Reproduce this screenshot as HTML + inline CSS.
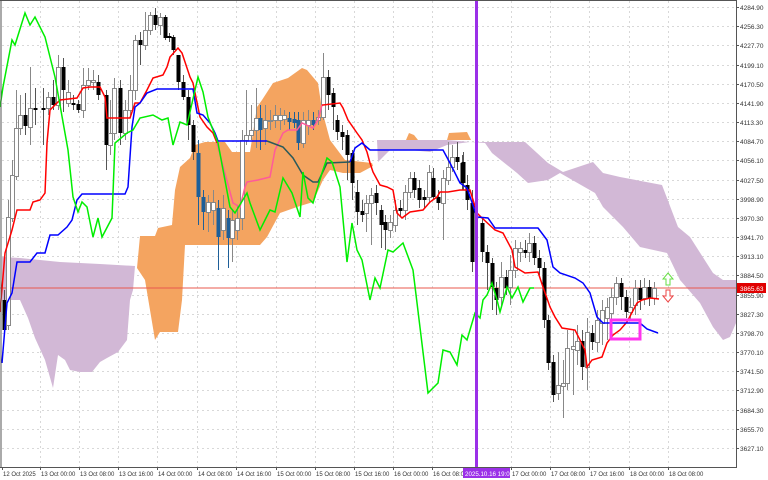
<!DOCTYPE html>
<html><head><meta charset="utf-8">
<style>
html,body{margin:0;padding:0;background:#fff;}
svg{display:block;font-family:"Liberation Sans",sans-serif;}
</style></head>
<body>
<svg id="s" width="768" height="480" viewBox="0 0 768 480" xmlns="http://www.w3.org/2000/svg">
<rect width="768" height="480" fill="#fff"/>
<g id="grid" stroke="#d8d8d8" stroke-width="1" stroke-dasharray="2,3"></g>
<!-- clouds -->
<polygon fill="#d2b8d6" points="2,257 20,258 60,262 100,264 135,266 133,290 130,300 127,340 118,352 107,358 100,362 92,372 80,372 70,370 65,360 58,355 53,388 45,360 35,338 28,318 20,300 10,300 5,302 2,300"/>
<polygon fill="#f4a460" points="137,268 140,236 155,236 158,228 172,225 175,190 180,167 190,158 195,145 205,142 225,142 232,152 250,152 257,107 262,100 273,83 288,78 302,68 307,70 318,83 322,110 330,140 345,160 372,163 373,166 360,173 343,173 330,170 323,180 313,202 297,207 280,213 267,237 260,245 185,245 182,300 178,332 160,332 155,340 150,310 145,280"/>
<polygon fill="#d2b8d6" points="377,140 407,140 447,140 470,142 487,142 525,142 548,163 563,172 593,162 603,173 620,177 662,185 678,227 690,237 713,273 723,280 736,280 736,323 730,337 723,340 713,327 700,303 680,280 667,253 640,247 623,227 603,207 595,193 560,173 548,180 528,183 517,173 492,153 485,143 470,142 447,145 430,152 410,150 390,150 378,162"/>
<polygon fill="#f4a460" points="406,140 409,133 414,135 418,140"/>
<polygon fill="#f4a460" points="447,140 449,133 467,132 471,140"/>
<!-- red price line -->
<line x1="0" y1="288" x2="736" y2="288" stroke="#e8584e" stroke-width="1"/>
<g id="candles"></g>
<!-- lines -->
<polyline fill="none" stroke="#ff0000" stroke-width="1.5" points="0,312 5,253 12,230 17,210 30,210 33,202 40,200 45,193 47,143 50,110 60,100 77,98 83,88 90,87 100,87 105,97 107,118 130,118 135,103 140,103 147,90 153,78 163,75 167,67 170,57 178,48 182,53 190,77 193,83 200,117 207,127 213,133 217,143"/>
<polyline fill="none" stroke="#ff5a9a" stroke-width="1.5" points="217,143 224,170 233,203 240,207 245,187 247,182 258,180 270,177 275,150 283,133 288,130 297,130 302,123 313,128 318,120 322,105"/>
<polyline fill="none" stroke="#ff0000" stroke-width="1.5" points="322,105 323,105 340,103 343,108 348,120 357,133 362,140 367,152 370,163 373,172 380,185 387,187 393,190 397,213 402,218 410,212 423,210 430,202 437,197 440,192 448,192 460,190 470,190 477,213 482,218 495,230 503,233 512,250 515,267 525,273 538,272 543,287 550,307 555,317 562,328 575,330 585,350 587,367 592,360 602,357 607,343 613,335 620,330 627,322 637,303 642,300 650,298 659,299"/>
<polyline fill="none" stroke="#0000ff" stroke-width="1.5" points="2,363 7,303 12,293 17,262 30,262 37,253 45,253 50,235 58,235 67,227 72,220 77,200 82,194 125,194 128,187 132,127 135,107 140,103 147,93 157,89 193,89 197,113 203,115 210,123 215,133 218,141 267,141"/>
<polyline fill="none" stroke="#2a5a5a" stroke-width="1.5" points="267,141 283,147 293,158 303,175 313,182 318,182 327,163 350,162"/>
<polyline fill="none" stroke="#0000ff" stroke-width="1.5" points="350,162 355,148 362,143 370,150 380,150 443,150 450,163 460,183 467,188 477,217 488,218 495,228 538,228 547,240 553,267 560,273 575,278 583,283 590,293 597,317 603,323 640,323 647,329 658,333"/>
<polyline fill="none" stroke="#00ee00" stroke-width="1.5" points="0,107 3,87 12,40 15,45 25,13 30,25 35,17 45,37 50,57 55,77 68,150 73,197 78,212 82,202 87,207 93,237 98,218 102,237 112,218 115,143 127,133 133,130 140,118 153,115 162,120 168,118 173,145 180,122 187,125 198,77 203,92 208,117 218,143 230,207 235,213 247,193 250,203 260,230 270,210 275,212 283,178 292,193 300,217 303,172 308,198 313,203 322,173 327,158 332,162 340,187 347,262 352,223 357,250 362,260 370,300 375,278 380,288 388,250 393,252 403,243 413,270 428,393 438,383 443,350 450,352 457,365 462,335 467,340 475,313 480,318 483,300 487,295 492,283 497,300 500,312 507,287 512,298 518,287 523,302 530,288 534,288"/>
<!-- purple vertical -->
<rect x="475" y="0" width="3" height="467" fill="#9b30e8"/>
<!-- pink box -->
<rect x="611" y="320" width="29" height="19" fill="none" stroke="#ff33ee" stroke-width="3"/>
<!-- arrows -->
<path d="M668,273 L673,279 L670,279 L670,285 L666,285 L666,279 L663,279 Z" fill="#fff" stroke="#66dd44" stroke-width="1"/>
<path d="M668,302 L673,296 L670,296 L670,290 L666,290 L666,296 L663,296 Z" fill="#fff" stroke="#ee4444" stroke-width="1"/>
<!-- frame -->
<line x1="1" y1="0" x2="1" y2="467" stroke="#555"/>
<line x1="0" y1="0.5" x2="737" y2="0.5" stroke="#555"/>
<line x1="736.5" y1="0" x2="736.5" y2="467" stroke="#555"/>
<line x1="0" y1="467.5" x2="737" y2="467.5" stroke="#555"/>
<g id="axis" font-size="6.5" fill="#333"></g>
<rect x="737" y="283" width="29" height="10" fill="#e00000"/>
<text x="740" y="291" font-size="6.5" fill="#fff">3865.63</text>
<rect x="463" y="468" width="47" height="10" fill="#9b30e8"/>
<text x="465" y="476" font-size="6.2" fill="#fff">2025.10.16 19:00</text>
</svg>
<script>
var NS="http://www.w3.org/2000/svg";
function el(t,a,p){var e=document.createElementNS(NS,t);for(var k in a)e.setAttribute(k,a[k]);p.appendChild(e);return e;}
var grid=document.getElementById('grid'),axis=document.getElementById('axis'),cg=document.getElementById('candles');
var prices=["4284.90","4256.30","4227.70","4199.10","4170.50","4141.90","4113.30","4084.70","4056.10","4027.50","3998.90","3970.30","3941.70","3913.10","3884.50","3855.90","3827.30","3798.70","3770.10","3741.50","3712.90","3684.30","3655.70","3627.10"];
prices.forEach(function(p,i){var y=Math.round(7+i*19.17)+0.5;
 el('line',{x1:2,y1:y,x2:736,y2:y},grid);
 el('line',{x1:736,y1:y,x2:739,y2:y,stroke:'#555','stroke-dasharray':'none'},grid);
 var t=el('text',{x:740,y:y+2.5},axis);t.textContent=p;});
var times=[[2,"12 Oct 2025"],[40,"13 Oct 00:00"],[79,"13 Oct 08:00"],[118,"13 Oct 16:00"],[157,"14 Oct 00:00"],[197,"14 Oct 08:00"],[236,"14 Oct 16:00"],[276,"15 Oct 00:00"],[315,"15 Oct 08:00"],[354,"15 Oct 16:00"],[393,"16 Oct 00:00"],[432,"16 Oct 08:00"],[511,"17 Oct 00:00"],[550,"17 Oct 08:00"],[589,"17 Oct 16:00"],[629,"18 Oct 00:00"],[668,"18 Oct 08:00"]];
times.forEach(function(t,i){var x=Math.round(t[0])+0.5;
 if(i>0)el('line',{x1:x,y1:1,x2:x,y2:467},grid);
 el('line',{x1:x,y1:467,x2:x,y2:470,stroke:'#555','stroke-dasharray':'none'},grid);
 var e=el('text',{x:t[0]+1,y:476,'font-size':'6'},axis);e.textContent=t[1];});
// x, top, bottom, type, high, low
var C=[[4,300,330,'b',290,335],[8,217,325,'w',200,330],[12,175,218,'w',160,222],[16,128,176,'w',90,180],[20,115,128,'w',95,135],[25,115,126,'b',93,135],[30,108,127,'w',67,145],[35,108,110,'b',88,125],[43,108,110,'b',88,145],[48,97,108,'w',92,115],[53,97,105,'b',80,110],[58,67,105,'w',55,110],[63,67,90,'b',58,112],[68,92,103,'w',80,107],[73,103,105,'b',95,110],[78,104,110,'b',100,113],[83,85,110,'w',68,118],[88,80,85,'w',68,90],[93,80,82,'w',70,90],[98,82,95,'b',75,100],[106,95,145,'b',90,170],[110,133,145,'w',100,155],[114,88,133,'w',78,140],[120,88,133,'b',80,145],[125,110,133,'w',100,140],[130,90,110,'w',75,115],[135,40,90,'w',35,100],[140,40,45,'b',32,65],[145,30,45,'w',12,50],[150,15,30,'w',12,35],[155,15,25,'b',8,30],[160,17,25,'w',13,35],[165,17,38,'b',15,40],[169,36,38,'b',33,42],[173,37,50,'b',35,55],[178,55,82,'b',55,90],[183,82,97,'b',75,100],[188,97,125,'b',90,140],[193,125,152,'b',120,160],[198,153,197,'u',140,225],[203,197,212,'u',190,230],[208,202,212,'w',195,232],[213,202,210,'w',190,225],[218,208,237,'u',200,270],[223,208,230,'w',195,240],[228,218,238,'u',210,268],[232,220,238,'w',210,262],[237,218,230,'w',205,240],[242,140,218,'w',130,230],[246,135,140,'w',90,145],[251,130,135,'w',105,140],[256,118,130,'w',88,148],[260,118,130,'u',105,150],[265,120,128,'w',105,145],[270,120,121,'w',110,130],[275,115,120,'w',105,128],[280,115,120,'w',108,130],[284,115,119,'w',110,125],[289,118,122,'u',112,130],[294,119,123,'u',112,128],[298,120,143,'u',112,150],[303,120,143,'w',112,148],[308,120,125,'w',110,135],[313,120,125,'u',112,130],[318,117,120,'w',110,125],[323,77,117,'w',53,120],[328,77,95,'b',70,110],[333,93,107,'b',88,130],[337,120,132,'b',115,140],[342,132,137,'b',125,150],[347,135,155,'b',130,180],[352,153,183,'b',150,200],[357,192,212,'b',180,225],[362,211,215,'b',200,222],[366,203,213,'w',195,232],[371,195,203,'w',188,245],[376,193,203,'b',185,215],[381,210,225,'b',205,248],[385,222,230,'b',215,250],[390,222,230,'w',215,238],[395,210,225,'w',200,232],[400,208,211,'b',200,216],[405,192,210,'w',185,220],[410,178,192,'w',172,198],[414,178,190,'b',172,198],[419,188,200,'b',180,208],[424,197,200,'b',190,208],[429,172,197,'w',165,203],[433,178,197,'b',168,200],[438,197,203,'b',190,210],[443,178,203,'w',170,240],[448,167,180,'w',142,185],[452,157,167,'w',145,172],[457,157,162,'b',142,170],[462,163,183,'b',155,190],[467,185,200,'b',175,210],[472,203,262,'b',190,272],[463,162,183,'b',152,190],[482,223,252,'b',218,262],[487,252,263,'b',245,290],[492,263,287,'b',258,310],[496,288,300,'b',282,315],[501,277,297,'w',262,308],[506,277,288,'b',270,295],[510,270,287,'w',255,305],[515,248,270,'w',240,278],[520,248,252,'w',242,262],[525,250,253,'b',240,258],[529,243,252,'w',233,262],[534,243,258,'b',236,265],[539,258,268,'b',250,275],[544,268,320,'b',262,328],[548,320,363,'b',315,370],[553,362,395,'b',355,402],[558,385,393,'w',352,400],[563,383,386,'w',360,418],[567,348,383,'w',330,390],[573,346,349,'w',330,395],[577,341,350,'w',325,365],[582,341,367,'b',330,380],[587,332,367,'w',318,390],[592,333,342,'b',325,350],[597,320,342,'w',310,352],[602,310,323,'w',300,345],[607,307,318,'w',298,340],[611,297,313,'w',288,330],[616,283,297,'w',277,305],[621,283,297,'b',278,310],[626,297,312,'b',290,318],[630,307,312,'w',298,320],[635,288,305,'w',280,315],[640,288,300,'b',280,310],[644,287,298,'w',278,305],[649,287,298,'b',280,306],[654,288,298,'w',282,305]];
C.forEach(function(c){var x=c[0],t=c[1],b=c[2];
 var wc=c[3]=='u'?'#1e5f99':'#888';
 if(c[3]=='b')wc='#555';
 el('line',{x1:x+0.5,y1:c[4],x2:x+0.5,y2:c[5],stroke:wc,'stroke-width':1},cg);
 var h=Math.max(1,b-t);
 if(c[3]=='w')el('rect',{x:x-1.5,y:t+0.5,width:4,height:h,fill:'#fff',stroke:'#888','stroke-width':1},cg);
 else el('rect',{x:x-1.5,y:t,width:4,height:h,fill:c[3]=='u'?'#1e5f99':'#000'},cg);
});
</script>
</body></html>
